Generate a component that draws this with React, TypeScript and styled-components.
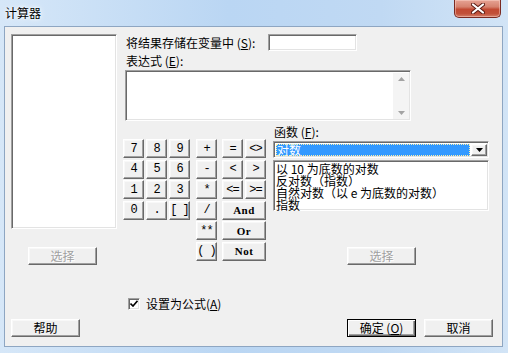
import React from "react";
import styled, { createGlobalStyle, css } from "styled-components";

const cjk = `"Noto Sans CJK SC", "Noto Sans", sans-serif`;
const mono = `"Liberation Mono", "Noto Sans CJK SC", monospace`;
const serif = `"Liberation Serif", "Noto Sans CJK SC", serif`;

const GlobalStyle = createGlobalStyle`
  html, body {
    margin: 0;
    padding: 0;
    background: #c4dbf2;
  }
  * {
    box-sizing: border-box;
  }
`;

const raised = css`
  background: #f0f0f0;
  border: 1px solid;
  border-color: #ffffff #696969 #696969 #ffffff;
  box-shadow: inset -1px -1px 0 #a0a0a0, inset 1px 1px 0 #f8f8f8;
`;

const sunken = css`
  background: #ffffff;
  border: 1px solid;
  border-color: #a0a0a0 #ffffff #ffffff #a0a0a0;
  box-shadow: inset 1px 1px 0 #696969, inset -1px -1px 0 #e3e3e3;
`;

const Window = styled.div`
  width: 508px;
  height: 353px;
  display: flex;
  flex-direction: column;
  background: linear-gradient(90deg, #d6e7f8 0%, #bad6f3 45%, #c0d9f3 75%, #d2e4f6 100%);
  font-family: ${cjk};
  font-size: 12px;
  color: #000;
  overflow: hidden;
`;

const TitleBar = styled.div`
  height: 26px;
  display: flex;
  align-items: flex-start;
  flex-shrink: 0;
`;

const Title = styled.div`
  padding: 5px 0 0 5px;
  font-size: 12px;
  line-height: 16px;
  text-shadow: 0 0 6px #ffffff, 0 0 3px #ffffff;
`;

const CloseButton = styled.div`
  margin-left: auto;
  margin-right: 7px;
  width: 47px;
  height: 18px;
  border: 1px solid #7a2a22;
  border-top: none;
  border-radius: 0 0 5px 5px;
  background: linear-gradient(180deg, #e6a394 0%, #d6826f 40%, #c24a33 55%, #c2513a 80%, #d4806a 100%);
  box-shadow: inset 0 0 0 1px rgba(255, 220, 210, 0.45);
  display: flex;
  align-items: center;
  justify-content: center;
`;

const Client = styled.div`
  flex: 1;
  margin: 0 5px 6px 4px;
  background: #f0f0f0;
  border: 1px solid #8ea6c2;
  padding: 7px 9px 9px 6px;
  display: flex;
  flex-direction: column;
`;

const MainRow = styled.div`
  display: flex;
  align-items: flex-start;
  flex: 1;
`;

const LeftColumn = styled.div`
  width: 106px;
  display: flex;
  flex-direction: column;
`;

const ListBox = styled.div<{ $h: number }>`
  ${sunken};
  height: ${(p) => p.$h}px;
`;

const Button = styled.button<{ $w?: number; $default?: boolean; $disabled?: boolean }>`
  ${raised};
  width: ${(p) => p.$w ?? 69}px;
  height: 18px;
  padding: 0;
  font-family: ${cjk};
  font-size: 12px;
  line-height: 14px;
  color: ${(p) => (p.$disabled ? "#a0a0a0" : "#000")};
  text-shadow: ${(p) => (p.$disabled ? "1px 1px 0 #ffffff" : "none")};
  ${(p) =>
    p.$default &&
    css`
      border-color: #000;
      box-shadow: inset 1px 1px 0 #ffffff, inset -1px -1px 0 #696969, inset -2px -2px 0 #a0a0a0;
    `}
`;

const SelectWrap = styled.div<{ $mt: number; $ml: number }>`
  margin-top: ${(p) => p.$mt}px;
  margin-left: ${(p) => p.$ml}px;
`;

const RightColumn = styled.div`
  margin-left: 8px;
  display: flex;
  flex-direction: column;
`;

const VarRow = styled.div`
  display: flex;
  align-items: center;
  height: 17px;
`;

const Label = styled.div<{ $w?: number }>`
  width: ${(p) => (p.$w ? `${p.$w}px` : "auto")};
  padding-left: 1px;
  line-height: 14px;
  white-space: nowrap;
`;

const Acc = styled.span`
  text-decoration: underline;
`;

const TextInput = styled.div`
  ${sunken};
  width: 89px;
  height: 17px;
`;

const ExprLabel = styled(Label)`
  margin-top: 3px;
`;

const TextArea = styled.div`
  ${sunken};
  margin-top: 2px;
  width: 286px;
  height: 51px;
  display: flex;
  justify-content: flex-end;
  padding: 2px 1px 1px 2px;
`;

const ScrollBar = styled.div`
  width: 16px;
  background: #f4f4f4;
  display: flex;
  flex-direction: column;
  justify-content: space-between;
  align-items: center;
  padding: 4px 0;
`;

const LowerRow = styled.div`
  display: flex;
  align-items: flex-start;
  margin-left: -2px;
`;

const Keypad = styled.div`
  margin-top: 18px;
  display: flex;
  align-items: flex-start;
`;

const KeyGrid = styled.div<{ $cols: number; $ml: number }>`
  display: grid;
  grid-template-columns: repeat(${(p) => p.$cols}, 21px);
  grid-auto-rows: 19px;
  column-gap: 2px;
  row-gap: 1.5px;
  margin-left: ${(p) => p.$ml}px;
`;

const Key = styled.button<{ $span?: number; $word?: boolean }>`
  ${raised};
  grid-column: span ${(p) => p.$span ?? 1};
  padding: 0;
  font-family: ${(p) => (p.$word ? serif : mono)};
  font-size: ${(p) => (p.$word ? 11 : 12)}px;
  font-weight: ${(p) => (p.$word ? 700 : 400)};
  letter-spacing: ${(p) => (p.$word ? "0.5px" : "-1px")};
  color: #000;
  line-height: 14px;
`;

const FuncPanel = styled.div`
  margin-left: 7px;
  margin-top: 4px;
  width: 216px;
  display: flex;
  flex-direction: column;
`;

const Combo = styled.div`
  ${sunken};
  margin-top: 2px;
  height: 17px;
  display: flex;
  align-items: stretch;
  padding: 2px 1px 1px 2px;
`;

const ComboValue = styled.div`
  flex: 1;
  background: #3399ff;
  color: #ffffff;
  line-height: 12px;
  padding-left: 1px;
  outline: 1px dotted #fff2a8;
  outline-offset: -1px;
  margin-right: 1px;
`;

const ComboButton = styled.div`
  ${raised};
  width: 16px;
  display: flex;
  align-items: center;
  justify-content: center;
`;

const FuncList = styled.div`
  ${sunken};
  margin-top: 2px;
  height: 51px;
  padding: 2px 0 0 2px;
`;

const FuncItem = styled.div`
  line-height: 12px;
  white-space: nowrap;
`;

const CheckRow = styled.div`
  margin-top: 30px;
  margin-left: 3px;
  display: flex;
  align-items: center;
  gap: 6px;
`;

const CheckBox = styled.div`
  ${sunken};
  width: 12px;
  height: 12px;
  display: flex;
  align-items: center;
  justify-content: center;
`;

const BottomRow = styled.div`
  display: flex;
  align-items: flex-end;
`;

const RightButtons = styled.div`
  margin-left: auto;
  display: flex;
  gap: 8px;
`;

const numKeys = ["7", "8", "9", "4", "5", "6", "1", "2", "3", "0", ".", "[ ]"];
const opKeys = ["+", "-", "*", "/", "**", "( )"];
const relKeys: { t: string; span?: number }[] = [
  { t: "=" },
  { t: "<>" },
  { t: "<" },
  { t: ">" },
  { t: "<=" },
  { t: ">=" },
  { t: "And", span: 2 },
  { t: "Or", span: 2 },
  { t: "Not", span: 2 },
];
const funcs = ["以 10 为底数的对数", "反对数（指数）", "自然对数（以 e 为底数的对数）", "指数"];

function Arrow({ up, color }: { up?: boolean; color: string }) {
  return (
    <svg width="7" height="4" viewBox="0 0 7 4">
      <path d={up ? "M0 4 L3.5 0 L7 4 Z" : "M0 0 L7 0 L3.5 4 Z"} fill={color} />
    </svg>
  );
}

export default function App() {
  return (
    <>
      <GlobalStyle />
      <Window>
        <TitleBar>
          <Title>计算器</Title>
          <CloseButton>
            <svg width="14" height="11" viewBox="0 0 14 11">
              <path d="M2 1.5 L12 9.5 M12 1.5 L2 9.5" stroke="#5a1a12" strokeWidth="4" strokeLinecap="round" />
              <path d="M2 1.5 L12 9.5 M12 1.5 L2 9.5" stroke="#ffffff" strokeWidth="2.2" strokeLinecap="round" />
            </svg>
          </CloseButton>
        </TitleBar>
        <Client>
          <MainRow>
            <LeftColumn>
              <ListBox $h={195} />
              <SelectWrap $mt={18} $ml={17}>
                <Button $disabled>选择</Button>
              </SelectWrap>
            </LeftColumn>
            <RightColumn>
              <VarRow>
                <Label $w={143}>
                  将结果存储在变量中 (<Acc>S</Acc>):
                </Label>
                <TextInput />
              </VarRow>
              <ExprLabel>
                表达式 (<Acc>E</Acc>):
              </ExprLabel>
              <TextArea>
                <ScrollBar>
                  <Arrow up color="#a3a3a3" />
                  <Arrow color="#a3a3a3" />
                </ScrollBar>
              </TextArea>
              <LowerRow>
                <Keypad>
                  <KeyGrid $cols={3} $ml={0}>
                    {numKeys.map((k) => (
                      <Key key={k}>{k}</Key>
                    ))}
                  </KeyGrid>
                  <KeyGrid $cols={1} $ml={6}>
                    {opKeys.map((k) => (
                      <Key key={k}>{k}</Key>
                    ))}
                  </KeyGrid>
                  <KeyGrid $cols={2} $ml={5}>
                    {relKeys.map((k) => (
                      <Key key={k.t} $span={k.span} $word={!!k.span}>
                        {k.t}
                      </Key>
                    ))}
                  </KeyGrid>
                </Keypad>
                <FuncPanel>
                  <Label>
                    函数 (<Acc>F</Acc>):
                  </Label>
                  <Combo>
                    <ComboValue>对数</ComboValue>
                    <ComboButton>
                      <Arrow color="#000" />
                    </ComboButton>
                  </Combo>
                  <FuncList>
                    {funcs.map((f) => (
                      <FuncItem key={f}>{f}</FuncItem>
                    ))}
                  </FuncList>
                  <SelectWrap $mt={36} $ml={74}>
                    <Button $disabled>选择</Button>
                  </SelectWrap>
                </FuncPanel>
              </LowerRow>
              <CheckRow>
                <CheckBox>
                  <svg width="8" height="7" viewBox="0 0 8 7">
                    <path d="M0.5 3.5 L3 6 L7.5 0.8" stroke="#000" strokeWidth="1.6" fill="none" />
                  </svg>
                </CheckBox>
                <span>
                  设置为公式(<Acc>A</Acc>)
                </span>
              </CheckRow>
            </RightColumn>
          </MainRow>
          <BottomRow>
            <Button>帮助</Button>
            <RightButtons>
              <Button $default>
                确定 (<Acc>O</Acc>)
              </Button>
              <Button>取消</Button>
            </RightButtons>
          </BottomRow>
        </Client>
      </Window>
    </>
  );
}
